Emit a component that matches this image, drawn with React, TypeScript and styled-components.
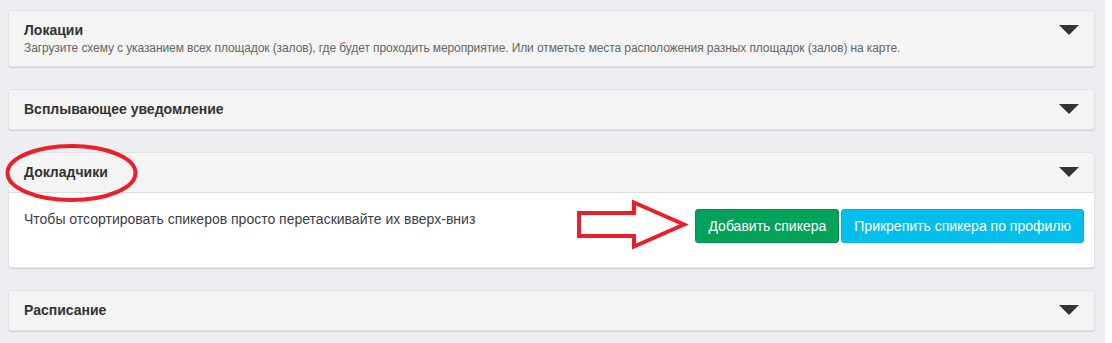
import styled, { createGlobalStyle } from 'styled-components';

const GlobalStyle = createGlobalStyle`
    html, body {
        margin: 0;
        padding: 0;
        background: #eceef2;
        font-family: "Liberation Sans", Arial, sans-serif;
    }
`;

const Page = styled.div`
    position: relative;
    display: flex;
    min-height: 343px;
    overflow: hidden;
`;

const Main = styled.div`
    flex: 1;
    display: flex;
    flex-direction: column;
    gap: 22px;
    padding: 10px 10px 0 8px;
`;

const Gutter = styled.div`
    width: 7px;
    background: #ffffff;
`;

const Panel = styled.div`
    background: #f4f4f4;
    border: 1px solid #e3e3e3;
    border-radius: 3px;
    box-shadow: 0 1px 1px rgba(0, 0, 0, 0.12);
`;

const Header = styled.div`
    display: flex;
    justify-content: space-between;
    align-items: flex-start;
    padding: 10px 15px;
`;

const HeaderText = styled.div`
    display: flex;
    flex-direction: column;
`;

const Title = styled.div`
    font-size: 14px;
    line-height: 19px;
    font-weight: bold;
    color: #333;
`;

const Subtitle = styled.div`
    font-size: 12px;
    line-height: 16px;
    letter-spacing: -0.1px;
    color: #666;
`;

const Caret = styled.div`
    margin-top: 4px;
    width: 0;
    height: 0;
    border-left: 10px solid transparent;
    border-right: 10px solid transparent;
    border-top: 10px solid #333;
`;

const Body = styled.div`
    display: flex;
    justify-content: space-between;
    align-items: flex-start;
    padding: 16px 10px 24px 15px;
    background: #fff;
    border-top: 1px solid #dcdcdc;
    border-radius: 0 0 3px 3px;
`;

const Hint = styled.div`
    font-size: 14px;
    line-height: 20px;
    color: #3b3b4a;
`;

const Buttons = styled.div`
    display: flex;
    gap: 2px;
`;

const Button = styled.button<{ $color: string; $border: string }>`
    height: 34px;
    padding: 0 12px;
    border: 1px solid ${p => p.$border};
    border-radius: 3px;
    background: ${p => p.$color};
    color: #fff;
    font-family: "Liberation Sans", Arial, sans-serif;
    font-size: 14px;
    cursor: pointer;
`;

const Overlay = styled.svg`
    position: absolute;
    left: 0;
    top: 0;
    pointer-events: none;
`;

function AccordionHeader(props: { title: string; subtitle?: string }) {
    return (
        <Header>
            <HeaderText>
                <Title>{props.title}</Title>
                {props.subtitle && <Subtitle>{props.subtitle}</Subtitle>}
            </HeaderText>
            <Caret />
        </Header>
    );
}

export default function App() {
    return (
        <Page>
            <GlobalStyle />
            <Main>
                <Panel>
                    <AccordionHeader
                        title="Локации"
                        subtitle="Загрузите схему с указанием всех площадок (залов), где будет проходить мероприятие. Или отметьте места расположения разных площадок (залов) на карте."
                    />
                </Panel>
                <Panel>
                    <AccordionHeader title="Всплывающее уведомление" />
                </Panel>
                <Panel>
                    <AccordionHeader title="Докладчики" />
                    <Body>
                        <Hint>Чтобы отсортировать спикеров просто перетаскивайте их вверх-вниз</Hint>
                        <Buttons>
                            <Button $color="#02a25a" $border="#029050">Добавить спикера</Button>
                            <Button $color="#04bfec" $border="#03b0da">Прикрепить спикера по профилю</Button>
                        </Buttons>
                    </Body>
                </Panel>
                <Panel>
                    <AccordionHeader title="Расписание" />
                </Panel>
            </Main>
            <Gutter />
            {/* red annotations drawn over the page */}
            <Overlay width="1112" height="343">
                <ellipse cx="71.5" cy="173" rx="64" ry="27" fill="none" stroke="#e8202a" strokeWidth="4" />
                <polygon
                    points="579,213 634,213 634,202.5 684,224.5 634,246.5 634,236 579,236"
                    fill="none"
                    stroke="#e8202a"
                    strokeWidth="4"
                    strokeLinejoin="miter"
                    strokeMiterlimit="6"
                />
            </Overlay>
        </Page>
    );
}
